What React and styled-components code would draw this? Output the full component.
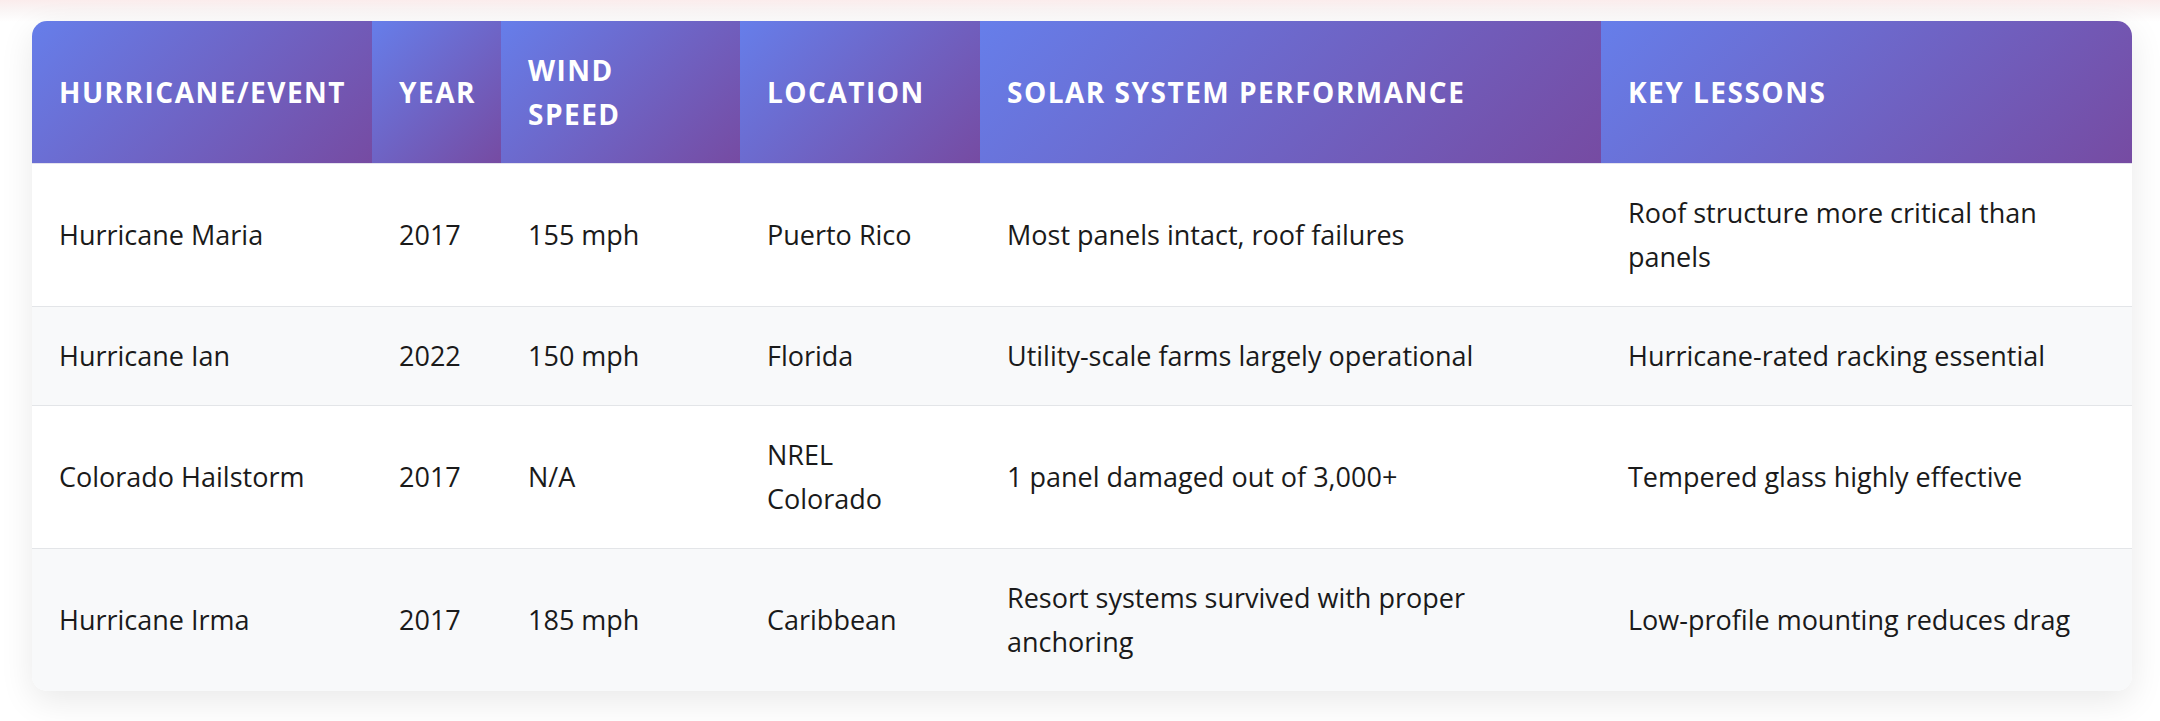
import React from 'react';
import styled, { createGlobalStyle } from 'styled-components';

const GlobalStyle = createGlobalStyle`
  html, body {
    margin: 0;
    padding: 0;
  }
  body {
    font-family: "Open Sans", "Noto Sans", sans-serif;
    background: linear-gradient(180deg, #fbecec 0px, #faf5f5 10px, #ffffff 22px);
    min-height: 721px;
  }
`;

const Page = styled.div`
  padding: 21px 28px 32px 32px;
`;

const Table = styled.table`
  width: 100%;
  border-collapse: separate;
  border-spacing: 0;
  table-layout: fixed;
  border-radius: 15px;
  overflow: hidden;
  background: #ffffff;
  box-shadow: 0 10px 34px rgba(0, 0, 0, 0.09);
`;

const HeadCell = styled.th`
  background: linear-gradient(135deg, #667eea 0%, #764ba2 100%);
  color: #ffffff;
  text-align: left;
  font-weight: 700;
  font-size: 28px;
  line-height: 44px;
  letter-spacing: 1.5px;
  text-transform: uppercase;
  white-space: ${(p) => (p.$wrap ? 'normal' : 'nowrap')};
  padding: 27px;
  vertical-align: middle;
  border-bottom: 1px solid #e4e2ee;
`;

const Row = styled.tr`
  background: ${(p) => (p.$striped ? '#f8f9fa' : '#ffffff')};

  &:not(:last-child) td {
    border-bottom: 1px solid #e3e5e8;
  }
`;

const Cell = styled.td`
  color: #1a1a1a;
  font-size: 27px;
  line-height: 44px;
  padding: 27px;
  vertical-align: middle;
`;

const columns = [
  { label: 'Hurricane/Event', width: 340 },
  { label: 'Year', width: 129 },
  { label: 'Wind Speed', width: 239, wrap: true },
  { label: 'Location', width: 240 },
  { label: 'Solar System Performance', width: 621 },
  { label: 'Key Lessons', width: 531 },
];

const rows = [
  ['Hurricane Maria', '2017', '155 mph', 'Puerto Rico', 'Most panels intact, roof failures', 'Roof structure more critical than panels'],
  ['Hurricane Ian', '2022', '150 mph', 'Florida', 'Utility-scale farms largely operational', 'Hurricane-rated racking essential'],
  ['Colorado Hailstorm', '2017', 'N/A', 'NREL Colorado', '1 panel damaged out of 3,000+', 'Tempered glass highly effective'],
  ['Hurricane Irma', '2017', '185 mph', 'Caribbean', 'Resort systems survived with proper anchoring', 'Low-profile mounting reduces drag'],
];

export default function App() {
  return (
    <>
      <GlobalStyle />
      <Page>
        <Table>
          <colgroup>
            {columns.map((c) => (
              <col key={c.label} style={{ width: c.width }} />
            ))}
          </colgroup>
          <thead>
            <tr>
              {columns.map((c) => (
                <HeadCell key={c.label} $wrap={c.wrap}>{c.label}</HeadCell>
              ))}
            </tr>
          </thead>
          <tbody>
            {rows.map((r, i) => (
              <Row key={r[0]} $striped={i % 2 === 1}>
                {r.map((v, j) => (
                  <Cell key={j}>{v}</Cell>
                ))}
              </Row>
            ))}
          </tbody>
        </Table>
      </Page>
    </>
  );
}
